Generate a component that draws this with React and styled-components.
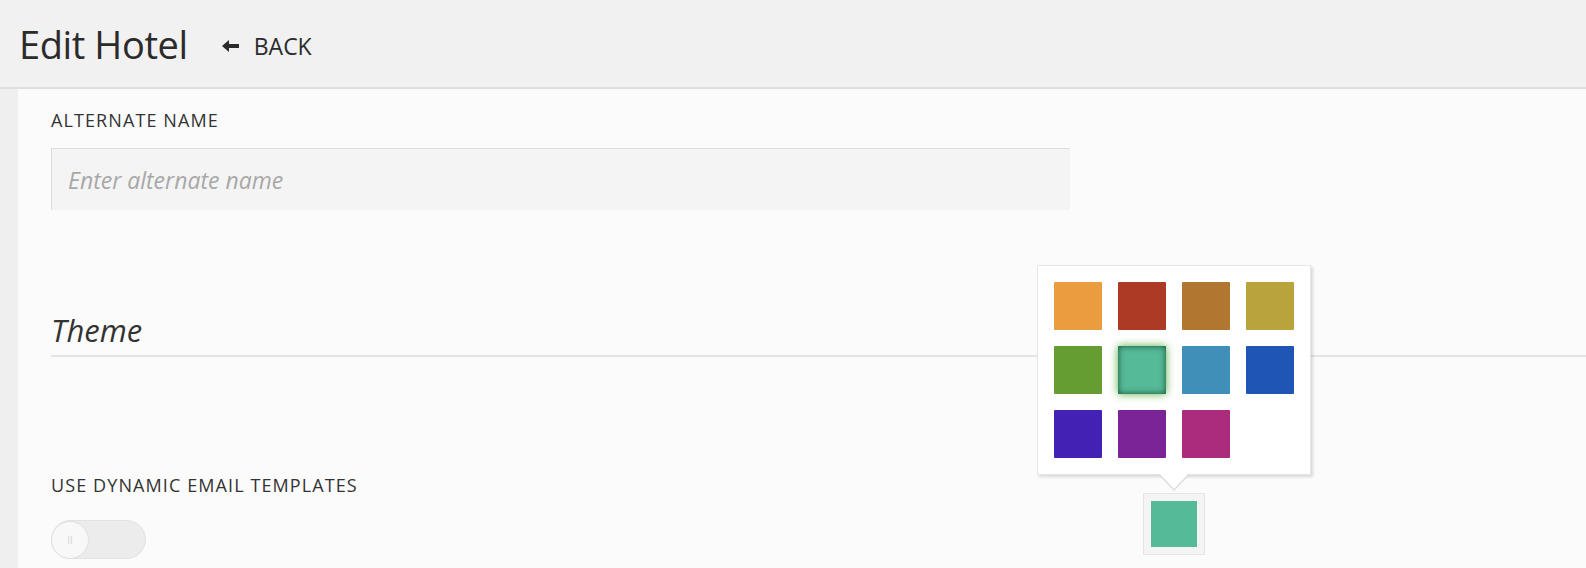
import styled, { createGlobalStyle } from "styled-components";

const COLORS = [
  "#ea9c3f",
  "#ad3a24",
  "#b1762f",
  "#b9a33d",
  "#669d33",
  "#55ba98",
  "#3f8fb9",
  "#1f55b5",
  "#4421b5",
  "#7b2497",
  "#ab2c7c",
];

const SELECTED = "#55ba98";

const App = () => {
  return (
    <>
      <Global />
      <Header>
        <Title>Edit Hotel</Title>
        <Back>
          <svg width="17" height="12" viewBox="0 0 17 12">
            <polygon points="0,6 7,0 7,12" fill="#2b2b2b" />
            <rect x="6" y="4" width="11" height="4" fill="#2b2b2b" />
          </svg>
          BACK
        </Back>
      </Header>
      <Panel>
        <Label>Alternate Name</Label>
        <Input placeholder="Enter alternate name" />
        <SectionTitle>Theme</SectionTitle>
        <Row>
          <div>
            <Label>Use Dynamic Email Templates</Label>
            <Toggle>
              <Knob>II</Knob>
            </Toggle>
          </div>
          <Picker>
            <Popover>
              {COLORS.map((c) => (
                <Swatch key={c} $color={c} $selected={c === SELECTED} />
              ))}
            </Popover>
            <Current>
              <CurrentSwatch $color={SELECTED} />
            </Current>
          </Picker>
        </Row>
      </Panel>
    </>
  );
};

export default App;

const Global = createGlobalStyle`
  body {
    margin: 0;
    background: #efefef;
    font-family: "Open Sans", "Noto Sans", sans-serif;
    color: #333;
  }
`;

const Header = styled.header`
  height: 87px;
  border-bottom: 2px solid #dedede;
  display: flex;
  align-items: center;
  padding-left: 19px;
  gap: 34px;
  background: #f1f1f1;
`;

const Title = styled.h1`
  margin: 0;
  font-size: 38px;
  font-weight: 400;
  color: #2b2b2b;
  letter-spacing: -0.4px;
`;

const Back = styled.a`
  display: flex;
  align-items: center;
  gap: 15px;
  font-size: 23px;
  color: #2b2b2b;
  margin-top: 4px;
  cursor: pointer;
`;

const Panel = styled.main`
  margin-left: 18px;
  background: #fbfbfb;
  padding: 20px 0 0 33px;
  height: 479px;
  box-sizing: border-box;
  overflow: hidden;
`;

const Label = styled.div`
  font-size: 18px;
  font-weight: 500;
  text-transform: uppercase;
  letter-spacing: 1.1px;
  color: #333;
  line-height: 22px;
`;

const Input = styled.input`
  display: block;
  margin-top: 17px;
  width: 1019px;
  height: 62px;
  box-sizing: border-box;
  background: #f4f4f4;
  border: none;
  border-top: 1px solid #dcdcdc;
  border-left: 1px solid #dcdcdc;
  padding: 0 16px;
  font-family: inherit;
  font-size: 23px;
  font-style: italic;
  outline: none;
  &::placeholder {
    color: #a8a8a8;
  }
`;

const SectionTitle = styled.h2`
  margin: 100px 0 0;
  font-size: 31px;
  font-style: italic;
  font-weight: 400;
  color: #333;
  line-height: 40px;
  padding-bottom: 5px;
  border-bottom: 2px solid #e4e4e4;
`;

const Row = styled.div`
  display: grid;
  grid-template-columns: 1092px auto;
  align-items: start;
  margin-top: 117px;
`;

const Toggle = styled.div`
  margin-top: 24px;
  width: 95px;
  height: 39px;
  box-sizing: border-box;
  border-radius: 20px;
  background: #ececec;
  border: 1px solid #e2e2e2;
  display: flex;
  align-items: center;
`;

const Knob = styled.div`
  width: 38px;
  height: 38px;
  border-radius: 50%;
  background: #f8f8f8;
  border: 1px solid #e0e0e0;
  box-sizing: border-box;
  margin-left: -1px;
  display: flex;
  align-items: center;
  justify-content: center;
  font-size: 10px;
  color: #d4d4d4;
`;

const Picker = styled.div`
  position: relative;
  justify-self: start;
  width: 62px;
  margin-top: 19px;
`;

const Popover = styled.div`
  position: absolute;
  bottom: calc(100% + 18px);
  left: 50%;
  transform: translateX(-50%);
  width: 274px;
  box-sizing: border-box;
  padding: 16px;
  background: #fff;
  border: 1px solid #e6e6e6;
  box-shadow: 2px 2px 3px rgba(0, 0, 0, 0.14);
  display: grid;
  grid-template-columns: repeat(4, 48px);
  gap: 16px;
  z-index: 2;
  &::before,
  &::after {
    content: "";
    position: absolute;
    left: 50%;
    transform: translateX(-50%);
    border-style: solid;
    border-color: transparent;
  }
  &::before {
    top: 100%;
    border-width: 17px 16px 0;
    border-top-color: #dcdcdc;
  }
  &::after {
    top: calc(100% - 1px);
    border-width: 16px 15px 0;
    border-top-color: #fff;
  }
`;

const Swatch = styled.div`
  width: 48px;
  height: 48px;
  background: ${(p) => p.$color};
  border-radius: 1px;
  cursor: pointer;
  box-shadow: ${(p) =>
    p.$selected
      ? "inset 0 0 6px rgba(0, 60, 30, 0.85), 0 0 9px rgba(80, 170, 50, 0.95)"
      : "none"};
`;

const Current = styled.div`
  width: 62px;
  height: 62px;
  box-sizing: border-box;
  padding: 7px;
  background: #f4f4f4;
  border: 1px solid #e6e6e6;
`;

const CurrentSwatch = styled.div`
  width: 100%;
  height: 100%;
  background: ${(p) => p.$color};
`;
